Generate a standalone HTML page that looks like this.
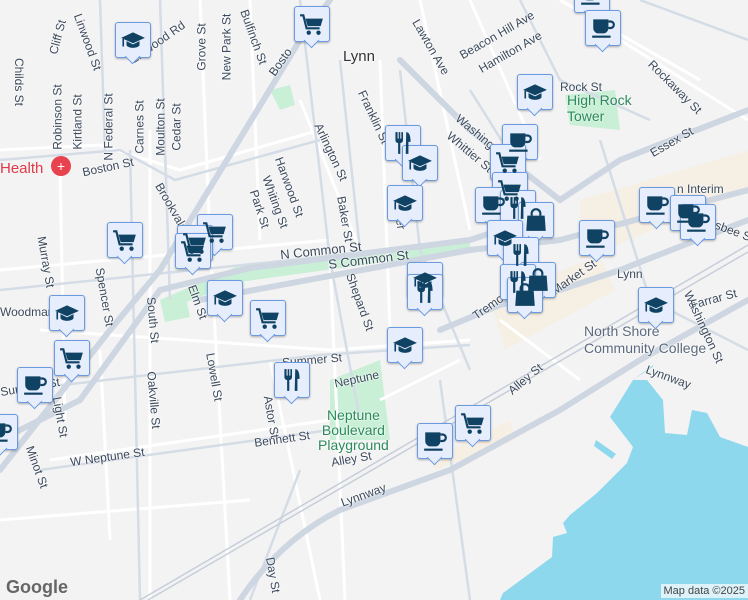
<!DOCTYPE html>
<html><head><meta charset="utf-8"><style>
body{margin:0}
#m{position:relative;width:748px;height:600px;overflow:hidden;background:#f4f3f4;font-family:"Liberation Sans",sans-serif}
.l{position:absolute;font-size:12px;color:#3b4a5c;white-space:nowrap;transform-origin:center;text-shadow:0 0 2px #fff,0 0 2px #fff}
.k{position:absolute;width:34px;height:34px;background:#e6edfc;border:1.5px solid #6a9ae0;border-radius:3px;box-shadow:0 1px 2px rgba(0,0,0,.3)}
.k:after{content:"";position:absolute;left:11px;top:28px;width:10px;height:10px;background:#e6edfc;border-right:1.5px solid #6a9ae0;border-bottom:1.5px solid #6a9ae0;transform:rotate(45deg)}
.k svg{position:absolute;left:4px;top:4px;width:26px;height:26px;z-index:1}
</style></head><body><div id="m">
<svg width="748" height="600" style="position:absolute;left:0;top:0">
<defs>
<symbol id="cart" viewBox="0 0 24 24"><path d="M1 4h3l3 12h12" fill="none" stroke="#0f4263" stroke-width="2"/><path d="M6 7h16l-2 7H8z" fill="#0f4263"/><circle cx="9" cy="20" r="2" fill="#0f4263"/><circle cx="18" cy="20" r="2" fill="#0f4263"/></symbol>
<symbol id="cap" viewBox="0 0 24 24"><path d="M1 10L12 5l11 5-11 5z" fill="#0f4263"/><path d="M6 13v4c2 3 10 3 12 0v-4l-6 3z" fill="#0f4263"/><path d="M3 11v7" stroke="#0f4263" stroke-width="1.5"/></symbol>
<symbol id="cup" viewBox="0 0 24 24"><path d="M3 4h14v8a5 5 0 0 1-5 5H8a5 5 0 0 1-5-5z" fill="#0f4263"/><path d="M17 6h2a3 3 0 0 1 0 6h-2" fill="none" stroke="#0f4263" stroke-width="2"/><rect x="2" y="19" width="17" height="2" fill="#0f4263"/></symbol>
<symbol id="fork" viewBox="0 0 24 24"><path d="M5 2v7c0 2 1 3 2.5 3v10h2V12c1.5 0 2.5-1 2.5-3V2h-1.5v6h-1V2h-1.5v6h-1V2z" fill="#0f4263"/><path d="M15 2c3 0 4 4 4 9h-2v11h-2.5z" fill="#0f4263"/></symbol>
<symbol id="bag" viewBox="0 0 24 24"><path d="M8 8V6a4 4 0 0 1 8 0v2" fill="none" stroke="#0f4263" stroke-width="2"/><path d="M4 8h16l1 14H3z" fill="#0f4263"/></symbol>
</defs>
<path d="M633 380L610 417L633 447L627 463L597 493L570 515L563 523L567 533L553 537L552 557L503 593L500 600H748V447L720 437L707 413L692 410L687 435L665 433L663 400L647 380L660 350L700 330L748 300V360L660 360Z" fill="#8dd8ec"/>
<path d="M633 380L647 380L660 350L748 300V360L660 362Z" fill="#f4f3f4"/>
<path d="M596 440l20 14-4 5-18-13z" fill="#8dd8ec"/>
<path d="M160 300L240 265L470 238L470 250L240 282L165 310Z" fill="#c9efd6"/>
<path d="M330 380L380 360L390 440L330 440Z" fill="#c9efd6"/>
<path d="M565 95L615 90L620 130L570 125Z" fill="#c9efd6"/>
<path d="M270 90l20-5 5 20-15 5z" fill="#c9efd6"/>
<path d="M160 300l25-8 5 25-25 5z" fill="#c9efd6"/>
<path d="M580 200l170-50v40l-170 70z" fill="#f6ecd8" opacity=".6"/>
<path d="M490 300l110-45 15 35-110 60z" fill="#f6ecd8" opacity=".6"/>
<path d="M430 460l80-40 5 20-80 30z" fill="#f6ecd8" opacity=".6"/>
<g fill="none" stroke="#fff" stroke-width="3">
<path d="M0 150L100 145L180 170L320 130"/><path d="M0 270L330 240"/><path d="M40 330L330 350L470 340"/><path d="M50 460L330 420"/><path d="M150 130L150 600"/><path d="M210 240L230 600"/><path d="M330 260L345 600"/><path d="M250 0L260 240"/><path d="M200 0L210 240"/><path d="M300 100L360 250"/><path d="M380 60L390 330"/><path d="M420 0L470 230"/><path d="M470 0L540 160"/><path d="M560 0L700 80"/><path d="M620 40L748 120"/><path d="M0 520L250 500"/><path d="M60 170L65 420"/><path d="M100 350L110 540"/><path d="M270 360L320 600"/><path d="M380 400L460 360"/><path d="M500 320L580 380"/>
</g>
<g fill="none" stroke="#d4dce6" stroke-width="2.5">
<path d="M0 160L120 150L175 180L320 140"/><path d="M0 290L340 255"/><path d="M20 390L320 355L470 345"/><path d="M40 470L330 430"/><path d="M130 150L140 600"/><path d="M300 0L330 260L360 420"/><path d="M400 70L420 250L470 370"/><path d="M340 60L360 250"/><path d="M470 90L520 170"/><path d="M600 140L650 300L748 350"/><path d="M520 0L560 80L650 120"/><path d="M640 0L748 40"/><path d="M160 0L170 300"/><path d="M100 0L105 150"/><path d="M440 380L470 600"/><path d="M250 600L300 470"/>
</g>
<g fill="none" stroke="#cdd6e1" stroke-width="6" stroke-linecap="round">
<path d="M0 470L110 330L160 270L300 40L330 0"/>
<path d="M240 600Q280 540 340 510L450 470L560 410L640 360L748 300"/>
<path d="M0 440L80 400L160 290L250 268L470 240L530 220"/>
<path d="M200 300L470 250L560 240L748 190"/>
<path d="M400 60L470 130L560 200"/>
<path d="M560 200L620 160L748 110"/>
<path d="M440 330L500 305L560 290L620 270L748 220"/>
</g>
<g fill="none" stroke="#c5ced9" stroke-width="1.5">
<path d="M140 600L748 245"/><path d="M148 600L748 252"/>
</g>
</svg>
<span class="l" style="left:343px;top:48px;font-size:15px;color:#333">Lynn</span>
<span class="l" style="left:0;top:160px;font-size:15px;color:#e0394a;text-shadow:none">Health</span>
<div style="position:absolute;left:51px;top:156px;width:20px;height:20px;border-radius:50%;background:#e8424f;color:#fff;font-size:14px;line-height:20px;text-align:center">+</div>
<span class="l" style="left:567px;top:92px;font-size:14px;color:#2a8a5a;text-shadow:0 0 2px #fff">High Rock<br>Tower</span>
<span class="l" style="left:318px;top:408px;font-size:14px;color:#2a8a5a;text-align:center;line-height:15px">Neptune<br>Boulevard<br>Playground</span>
<span class="l" style="left:584px;top:323px;font-size:14px;color:#5b6b7e;line-height:17px">North Shore<br>Community College</span>
<span class="l" style="left:617px;top:267px">Lynn</span>
<span class="l" style="left:280px;top:243px;transform:rotate(-6deg);font-size:13px">N Common St</span>
<span class="l" style="left:328px;top:252px;transform:rotate(-7deg);font-size:13px">S Common St</span>
<span class="l" style="left:82px;top:160px;transform:rotate(-12deg)">Boston St</span>
<span class="l" style="left:126px;top:35px;transform:rotate(-35deg)">Linwood Rd</span>
<span class="l" style="left:334px;top:372px;transform:rotate(-12deg)">Neptune</span>
<span class="l" style="left:282px;top:353px;transform:rotate(-5deg)">Summer St</span>
<span class="l" style="left:0;top:380px;transform:rotate(-10deg)">Summer St</span>
<span class="l" style="left:70px;top:450px;transform:rotate(-8deg)">W Neptune St</span>
<span class="l" style="left:254px;top:432px;transform:rotate(-8deg)">Bennett St</span>
<span class="l" style="left:331px;top:452px;transform:rotate(-10deg)">Alley St</span>
<span class="l" style="left:505px;top:372px;transform:rotate(-40deg)">Alley St</span>
<span class="l" style="left:340px;top:488px;transform:rotate(-20deg)">Lynnway</span>
<span class="l" style="left:645px;top:370px;transform:rotate(20deg)">Lynnway</span>
<span class="l" style="left:400px;top:40px;transform:rotate(60deg)">Lawton Ave</span>
<span class="l" style="left:455px;top:28px;transform:rotate(-30deg)">Beacon Hill Ave</span>
<span class="l" style="left:475px;top:45px;transform:rotate(-30deg)">Hamilton Ave</span>
<span class="l" style="left:640px;top:80px;transform:rotate(45deg)">Rockaway St</span>
<span class="l" style="left:648px;top:135px;transform:rotate(-30deg)">Essex St</span>
<span class="l" style="left:345px;top:110px;transform:rotate(65deg)">Franklin St</span>
<span class="l" style="left:300px;top:145px;transform:rotate(65deg)">Arlington St</span>
<span class="l" style="left:258px;top:180px;transform:rotate(70deg)">Harwood St</span>
<span class="l" style="left:248px;top:195px;transform:rotate(70deg)">Whiting St</span>
<span class="l" style="left:240px;top:202px;transform:rotate(72deg)">Park St</span>
<span class="l" style="left:322px;top:212px;transform:rotate(80deg)">Baker St</span>
<span class="l" style="left:330px;top:295px;transform:rotate(70deg)">Shepard St</span>
<span class="l" style="left:375px;top:200px;transform:rotate(80deg)">Hanover</span>
<span class="l" style="left:442px;top:145px;transform:rotate(40deg)">Whittier St</span>
<span class="l" style="left:450px;top:130px;transform:rotate(40deg)">Washington</span>
<span class="l" style="left:470px;top:297px;transform:rotate(-35deg)">Tremont</span>
<span class="l" style="left:548px;top:270px;transform:rotate(-35deg)">Market St</span>
<span class="l" style="left:665px;top:320px;transform:rotate(65deg)">Washington St</span>
<span class="l" style="left:690px;top:292px;transform:rotate(-15deg)">Farrar St</span>
<span class="l" style="left:560px;top:80px">Rock St</span>
<span class="l" style="left:677px;top:182px">n Interim</span>
<span class="l" style="left:700px;top:222px;transform:rotate(20deg)">Gilsbee St</span>
<span class="l" style="left:40px;top:30px;transform:rotate(-75deg)">Cliff St</span>
<span class="l" style="left:-5px;top:75px;transform:rotate(90deg)">Childs St</span>
<span class="l" style="left:58px;top:35px;transform:rotate(70deg)">Linwood St</span>
<span class="l" style="left:25px;top:110px;transform:rotate(-90deg)">Robinson St</span>
<span class="l" style="left:50px;top:115px;transform:rotate(-90deg)">Kirtland St</span>
<span class="l" style="left:75px;top:120px;transform:rotate(-90deg)">N Federal St</span>
<span class="l" style="left:113px;top:120px;transform:rotate(-90deg)">Carnes St</span>
<span class="l" style="left:132px;top:120px;transform:rotate(-90deg)">Moulton St</span>
<span class="l" style="left:153px;top:120px;transform:rotate(-90deg)">Cedar St</span>
<span class="l" style="left:178px;top:40px;transform:rotate(-90deg)">Grove St</span>
<span class="l" style="left:193px;top:40px;transform:rotate(-90deg)">New Park St</span>
<span class="l" style="left:225px;top:30px;transform:rotate(70deg)">Bulfinch St</span>
<span class="l" style="left:265px;top:55px;transform:rotate(-55deg)">Bosto</span>
<span class="l" style="left:145px;top:200px;transform:rotate(60deg)">Brookvale</span>
<span class="l" style="left:20px;top:255px;transform:rotate(80deg)">Murray St</span>
<span class="l" style="left:75px;top:290px;transform:rotate(80deg)">Spencer St</span>
<span class="l" style="left:130px;top:313px;transform:rotate(85deg)">South St</span>
<span class="l" style="left:190px;top:370px;transform:rotate(80deg)">Lowell St</span>
<span class="l" style="left:125px;top:393px;transform:rotate(85deg)">Oakville St</span>
<span class="l" style="left:40px;top:410px;transform:rotate(80deg)">Light St</span>
<span class="l" style="left:15px;top:460px;transform:rotate(70deg)">Minot St</span>
<span class="l" style="left:250px;top:410px;transform:rotate(80deg)">Astor St</span>
<span class="l" style="left:255px;top:568px;transform:rotate(80deg)">Day St</span>
<span class="l" style="left:180px;top:295px;transform:rotate(70deg)">Elm St</span>
<span class="l" style="left:0px;top:305px">Woodman</span>
<div style="position:absolute;left:6px;top:577px;font-size:18px;color:#666;font-weight:bold">Google</div>
<div style="position:absolute;right:0;top:584px;font-size:11px;color:#444;background:rgba(255,255,255,.7);padding:1px 3px">Map data ©2025</div>
<div class="k" style="left:574px;top:-23px"><svg><use href="#cup"/></svg></div>
<div class="k" style="left:585px;top:10px"><svg><use href="#cup"/></svg></div>
<div class="k" style="left:115px;top:22px"><svg><use href="#cap"/></svg></div>
<div class="k" style="left:294px;top:6px"><svg><use href="#cart"/></svg></div>
<div class="k" style="left:517px;top:74px"><svg><use href="#cap"/></svg></div>
<div class="k" style="left:502px;top:124px"><svg><use href="#cup"/></svg></div>
<div class="k" style="left:385px;top:125px"><svg><use href="#fork"/></svg></div>
<div class="k" style="left:402px;top:145px"><svg><use href="#cap"/></svg></div>
<div class="k" style="left:490px;top:144px"><svg><use href="#cart"/></svg></div>
<div class="k" style="left:387px;top:185px"><svg><use href="#cap"/></svg></div>
<div class="k" style="left:492px;top:172px"><svg><use href="#cart"/></svg></div>
<div class="k" style="left:475px;top:187px"><svg><use href="#cup"/></svg></div>
<div class="k" style="left:500px;top:190px"><svg><use href="#fork"/></svg></div>
<div class="k" style="left:518px;top:202px"><svg><use href="#bag"/></svg></div>
<div class="k" style="left:487px;top:220px"><svg><use href="#cap"/></svg></div>
<div class="k" style="left:503px;top:237px"><svg><use href="#fork"/></svg></div>
<div class="k" style="left:520px;top:262px"><svg><use href="#bag"/></svg></div>
<div class="k" style="left:500px;top:264px"><svg><use href="#fork"/></svg></div>
<div class="k" style="left:507px;top:277px"><svg><use href="#bag"/></svg></div>
<div class="k" style="left:107px;top:222px"><svg><use href="#cart"/></svg></div>
<div class="k" style="left:197px;top:214px"><svg><use href="#cart"/></svg></div>
<div class="k" style="left:177px;top:225px"><svg><use href="#cart"/></svg></div>
<div class="k" style="left:175px;top:233px"><svg><use href="#cart"/></svg></div>
<div class="k" style="left:207px;top:280px"><svg><use href="#cap"/></svg></div>
<div class="k" style="left:250px;top:300px"><svg><use href="#cart"/></svg></div>
<div class="k" style="left:49px;top:295px"><svg><use href="#cap"/></svg></div>
<div class="k" style="left:54px;top:340px"><svg><use href="#cart"/></svg></div>
<div class="k" style="left:17px;top:367px"><svg><use href="#cup"/></svg></div>
<div class="k" style="left:-18px;top:414px"><svg><use href="#cup"/></svg></div>
<div class="k" style="left:274px;top:362px"><svg><use href="#fork"/></svg></div>
<div class="k" style="left:407px;top:262px"><svg><use href="#cap"/></svg></div>
<div class="k" style="left:407px;top:274px"><svg><use href="#fork"/></svg></div>
<div class="k" style="left:387px;top:327px"><svg><use href="#cap"/></svg></div>
<div class="k" style="left:417px;top:423px"><svg><use href="#cup"/></svg></div>
<div class="k" style="left:455px;top:405px"><svg><use href="#cart"/></svg></div>
<div class="k" style="left:579px;top:220px"><svg><use href="#cup"/></svg></div>
<div class="k" style="left:639px;top:187px"><svg><use href="#cup"/></svg></div>
<div class="k" style="left:670px;top:195px"><svg><use href="#cup"/></svg></div>
<div class="k" style="left:680px;top:204px"><svg><use href="#cup"/></svg></div>
<div class="k" style="left:638px;top:287px"><svg><use href="#cap"/></svg></div>
</div></body></html>
